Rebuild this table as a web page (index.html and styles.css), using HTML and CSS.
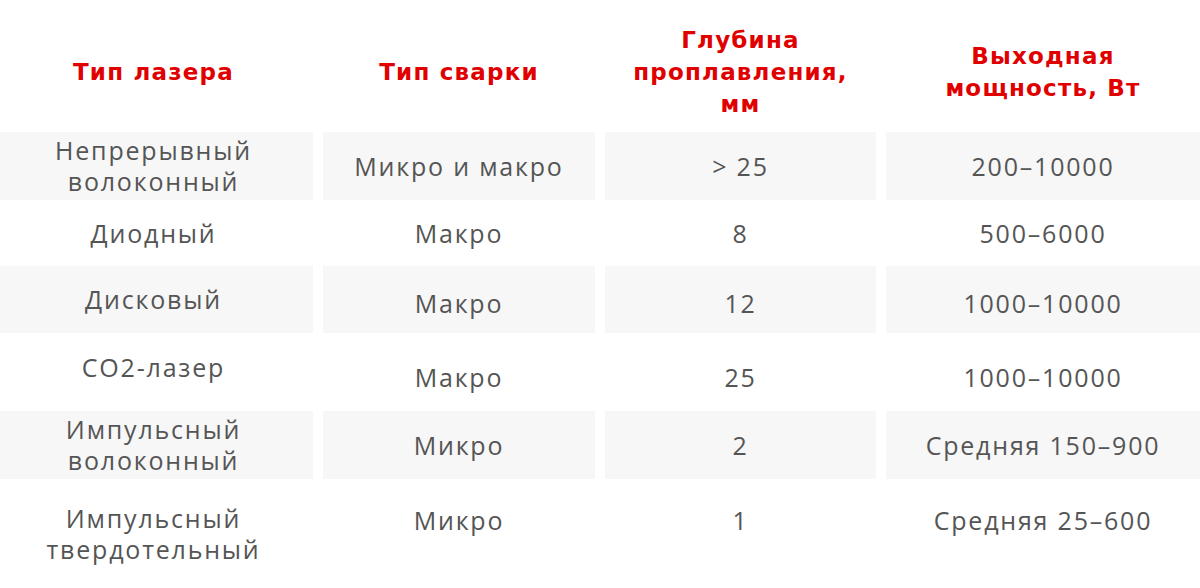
FILE: index.html
```html
<!DOCTYPE html>
<html lang="ru">
<head>
<meta charset="utf-8">
<title>Типы лазеров</title>
<link rel="stylesheet" href="styles.css">
</head>
<body>
<div class="table">
  <div class="row head">
    <div class="cell">Тип лазера</div>
    <div class="cell">Тип сварки</div>
    <div class="cell">Глубина<br>проплавления,<br>мм</div>
    <div class="cell">Выходная<br>мощность, Вт</div>
  </div>
  <div class="row shade r1">
    <div class="cell">Непрерывный<br>волоконный</div>
    <div class="cell">Микро и макро</div>
    <div class="cell">&gt; 25</div>
    <div class="cell">200–10000</div>
  </div>
  <div class="row r2">
    <div class="cell">Диодный</div>
    <div class="cell">Макро</div>
    <div class="cell">8</div>
    <div class="cell">500–6000</div>
  </div>
  <div class="row shade r3">
    <div class="cell">Дисковый</div>
    <div class="cell drop-s">Макро</div>
    <div class="cell drop-s">12</div>
    <div class="cell drop-s">1000–10000</div>
  </div>
  <div class="row r4">
    <div class="cell lift">CO2-лазер</div>
    <div class="cell drop">Макро</div>
    <div class="cell drop">25</div>
    <div class="cell drop">1000–10000</div>
  </div>
  <div class="row shade r5">
    <div class="cell">Импульсный<br>волоконный</div>
    <div class="cell">Микро</div>
    <div class="cell">2</div>
    <div class="cell">Средняя 150–900</div>
  </div>
  <div class="row r6">
    <div class="cell">Импульсный<br>твердотельный</div>
    <div class="cell lift-l">Микро</div>
    <div class="cell lift-l">1</div>
    <div class="cell lift-l">Средняя 25–600</div>
  </div>
</div>
</body>
</html>
```
FILE: styles.css
```css
html, body {
  margin: 0;
  padding: 0;
  background: #ffffff;
}

body {
  font-family: "Open Sans", "DejaVu Sans", sans-serif;
  color: #555555;
  width: 1200px;
  height: 588px;
  overflow: hidden;
}

.table {
  display: flex;
  flex-direction: column;
}

.row {
  display: grid;
  grid-template-columns: 313px 272px 271px 314px;
  column-gap: 10px;
}

.cell {
  display: flex;
  align-items: center;
  justify-content: center;
  text-align: center;
  font-size: 25px;
  line-height: 31px;
  letter-spacing: 1.8px;
}

.row .cell:first-child {
  padding-right: 6px;
}

.head {
  height: 132px;
}

.head .cell {
  font-family: "DejaVu Sans", sans-serif;
  font-weight: bold;
  font-size: 23px;
  line-height: 32px;
  letter-spacing: 1.2px;
  color: #e10000;
  padding-top: 12px;
}

.shade .cell {
  background: #f7f7f7;
}

.r1 { height: 68px; }
.r2 { height: 66px; }
.r3 { height: 67px; }
.r4 { height: 78px; }
.r5 { height: 68px; }
.r6 { height: 109px; }

.drop-s { padding-top: 8px; }
.drop { padding-top: 10px; }
.lift { padding-bottom: 10px; }
.lift-l { padding-bottom: 27px; }
```
